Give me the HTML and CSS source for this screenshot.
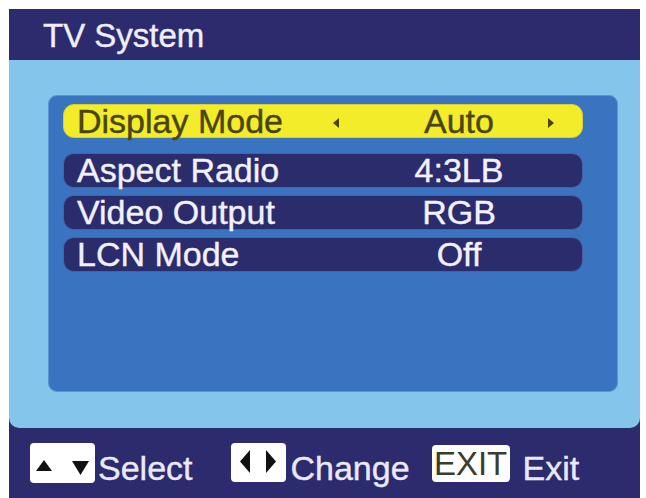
FILE: index.html
```html
<!DOCTYPE html>
<html>
<head>
<meta charset="utf-8">
<link rel="stylesheet" href="styles.css">
</head>
<body>
<div class="screen">
  <div class="title">TV System</div>
  <div class="body">
    <div class="panel">
      <div class="row active">
        <span class="label">Display Mode</span>
        <svg class="arr arr-l" width="6" height="10" viewBox="0 0 6 10"><polygon points="6,0 0,5 6,10"/></svg>
        <span class="value">Auto</span>
        <svg class="arr arr-r" width="6" height="10" viewBox="0 0 6 10"><polygon points="0,0 6,5 0,10"/></svg>
      </div>
      <div class="row">
        <span class="label">Aspect Radio</span>
        <span class="value">4:3LB</span>
      </div>
      <div class="row">
        <span class="label">Video Output</span>
        <span class="value">RGB</span>
      </div>
      <div class="row">
        <span class="label">LCN Mode</span>
        <span class="value">Off</span>
      </div>
    </div>
  </div>
  <div class="footer">
    <div class="key key-ud">
      <svg width="65" height="40" viewBox="0 0 65 40"><polygon points="14,17 22,28 6,28"/><polygon points="42,18 59,18 50.5,32"/></svg>
    </div>
    <span class="ftext ft-select">Select</span>
    <div class="key key-lr">
      <svg width="55" height="39" viewBox="0 0 55 39"><polygon points="19,7 19,30 9,18.5"/><polygon points="35,7 45,18.5 35,30"/></svg>
    </div>
    <span class="ftext ft-change">Change</span>
    <div class="key key-exit">EXIT</div>
    <span class="ftext ft-exit">Exit</span>
  </div>
</div>
</body>
</html>
```

FILE: styles.css
```css
* { box-sizing: border-box; }
html, body { margin: 0; padding: 0; background: #ffffff; }
body { font-family: "Liberation Sans", Arial, sans-serif; }

.screen {
  margin: 9px 0 0 9px;
  width: 631px;
  height: 489px;
  background: #2b2b6d;
  display: flex;
  flex-direction: column;
}

.title {
  height: 51px;
  padding: 3px 0 0 34px;
  line-height: 48px;
  font-size: 33px;
  color: #f1eefc;
  -webkit-text-stroke: 0.4px #f1eefc;
}

.body {
  height: 368px;
  background: #83c5eb;
  border-radius: 0 0 10px 10px;
  padding: 35px 22px 0 39px;
}

.panel {
  height: 297px;
  background: #3a74c1;
  border-radius: 9px;
  border: 1px solid #5d92d2;
  padding: 8px 34px 0 14px;
  display: flex;
  flex-direction: column;
  gap: 7px;
}

.row {
  height: 35px;
  display: grid;
  grid-template-columns: 269px 6px 40px 160px 9px 6px 1fr;
  align-items: center;
  background: #2a2c6c;
  border: 1px solid #4a5fa4;
  border-radius: 11px;
  color: #f3f0ff;
  font-size: 34px;
  -webkit-text-stroke: 0.4px #f3f0ff;
}

.row.active {
  height: 34px;
  margin-bottom: 8px;
  background: #f2ec2a;
  border-color: #d8d030;
  color: #4a4510;
  -webkit-text-stroke: 0.4px #4a4510;
}

.label {
  grid-column: 1;
  padding-left: 13px;
  line-height: 33px;
  padding-bottom: 2px;
  white-space: nowrap;
}

.value {
  grid-column: 4;
  text-align: center;
  line-height: 33px;
  padding-bottom: 2px;
  white-space: nowrap;
}

.arr { fill: #4a4510; display: block; }
.arr-l { grid-column: 2; }
.arr-r { grid-column: 6; }

.footer {
  flex: 1;
  display: flex;
  align-items: flex-start;
  padding: 15px 0 0 21px;
}

.key {
  background: #ffffff;
  border-radius: 4px;
  flex: none;
}
.key svg { display: block; fill: #111111; }
.key-ud { width: 65px; height: 40px; }
.key-lr { width: 55px; height: 39px; margin-left: 38px; }
.key-exit {
  width: 78px;
  height: 37px;
  margin-left: 22px;
  margin-top: 2px;
  color: #3c3b2e;
  font-size: 33px;
  line-height: 37px;
  text-align: center;
}

.ftext {
  color: #ebe8fa;
  font-size: 34px;
  line-height: 40px;
  padding-top: 5px;
  white-space: nowrap;
  -webkit-text-stroke: 0.4px #ebe8fa;
}
.ft-select { margin-left: 3px; }
.ft-change { margin-left: 5px; }
.ft-exit { margin-left: 13px; }
```
